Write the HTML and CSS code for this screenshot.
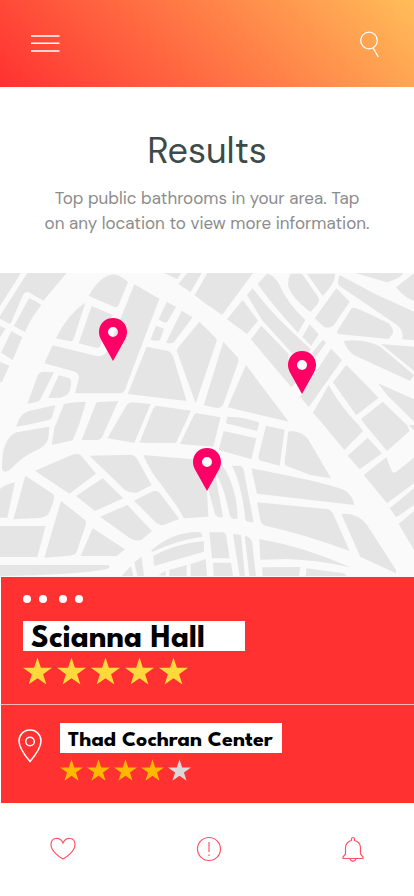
FILE: index.html
```html
<!DOCTYPE html>
<html lang="en">
<head>
<meta charset="utf-8">
<meta name="viewport" content="width=device-width, initial-scale=1">
<title>Results</title>
<link rel="stylesheet" href="styles.css">
</head>
<body>
<svg class="defs" aria-hidden="true">
  <symbol id="star" viewBox="0 0 30 28"><path d="M15 0L18.5 10.7H30L20.8 17.3L24.2 28L15 21.4L5.8 28L9.2 17.3L0 10.7H11.5Z"/></symbol>
  <symbol id="pin" viewBox="0 0 28 43"><path fill-rule="evenodd" d="M14 0C6 0 0 6 0 14C0 17 .8 19 2 21.500L14 43L26 21.500C27.200 19 28 17 28 14C28 6 22 0 14 0ZM14 9A5 5 0 1 1 14 19A5 5 0 1 1 14 9Z"/></symbol>
</svg>
<header class="topbar">
  <button type="button" class="icon-button" aria-label="Menu"><svg width="30" height="28" viewBox="0 0 30 28"><path d="M1 6H29.500M1 13.300H29.500M1 21H29.500" fill="none" stroke="#fff" stroke-width="1.400"/></svg></button>
  <button type="button" class="icon-button" aria-label="Search"><svg width="22" height="28" viewBox="0 0 22 28"><circle cx="11" cy="10.500" r="8.300" fill="none" stroke="#fff" stroke-width="1.200"/><path d="M15 17.800L20.300 27" fill="none" stroke="#fff" stroke-width="1.300"/></svg></button>
</header>
<main>
  <section class="intro">
    <h1>Results</h1>
    <p>Top public bathrooms in your area. Tap<br>on any location to view more information.</p>
  </section>
  <section class="map" aria-label="Map">
    <svg class="streets" viewBox="0 0 1242 912" aria-hidden="true">
      <rect width="1242" height="912" fill="#fafafa"/>
      <g fill="#e5e5e5">
        <path transform="translate(0 -9)" d="M0 9H63L0 108ZM82 9H200L130 92L86 67Q74 64 69 75L34 156Q32 163 26 160L0 146V138ZM87 85Q92 84 124 105Q95 140 75 186L42 168ZM0 168L17 176L0 202ZM34 184L67 202L38 270L3 248ZM0 275L28 287L5 338L0 335ZM266 78Q300 17 340 13Q360 15 384 36L358 100Q354 112 346 112ZM256 98L221 206Q218 215 210 214L168 205Q205 130 256 98ZM275 108L338 135L305 190V220Q302 234 290 234L236 220ZM403 43L478 86L382 340Q375 370 360 370H225L237 325Q238 312 225 305L133 280L158 226L290 258Q312 260 320 245L360 150ZM125 306H162L120 390Q115 397 82 402L110 325Q115 308 125 306ZM176 316L205 323Q216 327 213 345Q211 378 180 383L145 384ZM50 465Q62 425 100 420L166 406L156 442Q152 450 144 451L80 465ZM192 402Q200 398 258 395L237 465H167ZM440 230L505 243Q513 247 520 262L560 393L383 372ZM500 96L528 110L502 156Q496 162 476 148ZM468 167L492 176L480 210Q465 216 452 208ZM545 122L578 142L522 216Q518 222 498 218ZM492 9H545L532 28ZM562 9H605L572 66L535 42ZM627 9V109L584 76L622 9Z"/>
        <path transform="translate(495 -9)" d="M103 155L152 203Q157 208 154 216L92 400L38 250Q33 242 38 235ZM175 215L218 262Q223 268 220 276L175 402Q170 414 155 414L116 406Z"/>
        <path transform="translate(240 351)" d="M48 40Q50 36 60 36L115 33L66 142Q62 150 50 150H5ZM155 37L212 42L163 158L82 145L140 45Q145 37 155 37ZM230 47L333 62L288 158H178L220 55Q224 47 230 47ZM350 70L422 82L400 170L300 162L340 78Q343 70 350 70ZM438 100Q438 82 460 82Q520 90 538 98L531 123Z"/>
        <path transform="translate(621 -9)" d="M0 9H138L52 126L45 135L0 103ZM117 285L245 455L62 412ZM107 90L153 152L120 192L60 148ZM137 55Q200 140 312 238L290 262L255 250L165 150L120 75ZM165 28L180 11Q200 15 215 40Q240 100 295 150L273 188Q200 110 152 42ZM163 167L245 252L243 300L270 335L253 352L132 208ZM308 163L335 193L312 228L286 200ZM250 11H285L333 80Q340 92 330 105L310 126Q250 80 243 45Q243 25 250 11ZM300 11H385Q385 40 347 78ZM388 55L428 95L383 162Q370 178 350 170L323 145ZM440 113Q450 112 545 160Q560 175 558 190L545 207L400 193Q385 190 393 180L428 123Q434 113 440 113ZM398 15L500 70L621 125V211L586 208Q590 180 570 165L398 48Q388 40 398 15ZM445 9H590Q580 25 540 37ZM621 10V92Q600 90 567 52ZM410 213Q470 205 520 230L621 315L610 333L440 255Q420 240 410 213ZM522 222L621 230V303ZM347 209L357 218L325 263L315 250ZM372 236L405 270L305 412L280 380L324 310ZM418 284L515 383L448 436L378 337ZM513 340L621 388V455L540 375ZM527 395L600 465H475L462 447ZM365 345Q400 410 455 465H350L318 428ZM60 440Q130 440 155 465H152L62 462Z"/>
        <path transform="translate(0 456)" d="M48 5L80 0H50ZM148 5L145 40Q140 65 100 80Q60 100 35 130Q10 150 6 130Q5 40 50 22ZM165 0H237L218 46L155 60ZM105 137L215 90Q240 80 250 100L288 146L208 206ZM268 92L395 89Q405 92 410 100L455 180L410 203Q390 205 375 195ZM308 160L370 220L285 258L228 213ZM430 90L580 103L621 200L625 275L552 280Q545 270 535 250L485 180Q450 140 430 90ZM402 227L460 198Q475 195 480 205L538 282L490 300Q475 300 465 290ZM382 240L456 318L425 344Q405 350 390 340L300 275ZM76 152L160 208Q165 215 160 230L147 265Q140 280 100 280L40 283ZM0 192Q15 178 45 172L22 278H0ZM0 303H137L112 396H0ZM183 228L255 285Q260 292 257 300L230 380Q228 390 205 392L133 398ZM278 310L375 373L350 393H242ZM0 420H325Q335 425 320 432Q230 450 0 453ZM455 375Q520 320 595 321Q607 322 607 335Q530 345 455 382ZM460 392Q530 355 612 348V380L462 423ZM475 450L497 437V453ZM508 435L560 420V453H508ZM572 417L617 403L621 453H572ZM393 423L400 453H365ZM403 412L425 395L432 453H412Z"/>
        <path transform="translate(621 456)" d="M50 18L148 40L133 103L35 75ZM177 2L233 14L218 122L165 108Q152 105 155 90ZM250 18Q290 20 305 45L372 160L310 150L240 123Q232 120 233 110L243 25Q244 18 250 18ZM133 130Q390 180 420 200Q440 220 442 240L150 206ZM150 232L365 253Q375 258 380 270L428 378Q300 330 175 302Q160 295 160 285ZM403 267Q450 262 480 300L567 435V445L460 395ZM157 342Q290 365 430 427Q330 405 240 402L160 404ZM165 427L280 426L276 453H167ZM298 430L410 445L420 453H296ZM350 0H455L468 18L412 75ZM475 0H600L608 18L540 78ZM590 0H605L621 16V0ZM482 38L525 85L458 133L422 92ZM538 97L555 140Q562 145 568 140L621 98V175L540 235L470 150ZM621 190V240L568 277L548 250ZM621 258V375L575 297ZM4 193L24 145L48 275Q40 282 25 270ZM42 118Q50 125 58 140Q90 200 92 280Q75 287 68 270Q50 180 28 150ZM75 122H100Q108 125 110 135L140 292Q120 292 115 285Q105 180 75 122ZM7 322H50Q57 325 58 335L68 400H15ZM18 413H72L78 453H20ZM78 326L102 330L114 453H98ZM113 333Q130 335 135 350L147 453H127Z"/>
      </g>
    </svg>
    <button type="button" class="marker marker-west" aria-label="Location 1"><svg><use href="#pin"/></svg></button>
    <button type="button" class="marker marker-east" aria-label="Location 2"><svg><use href="#pin"/></svg></button>
    <button type="button" class="marker marker-south" aria-label="Location 3"><svg><use href="#pin"/></svg></button>
  </section>
  <section class="places">
    <article class="place featured">
      <div class="dots" aria-hidden="true"><span class="pair"><i></i><i></i></span><span class="pair"><i></i><i></i></span></div>
      <h2>Scianna Hall</h2>
      <div class="stars large" role="img" aria-label="5 of 5 stars"><svg><use href="#star"/></svg><svg><use href="#star"/></svg><svg><use href="#star"/></svg><svg><use href="#star"/></svg><svg><use href="#star"/></svg></div>
    </article>
    <article class="place compact">
      <svg class="outline-pin" width="24" height="34" viewBox="0 0 24 34" fill="none" stroke="#fff" stroke-width="1.500" aria-hidden="true"><path d="M12 1C5.500 1 1 6 1 12C1 19 6.500 26 12 32.500C17.500 26 23 19 23 12C23 6 18.500 1 12 1Z"/><circle cx="12" cy="12.500" r="4.300"/></svg>
      <div>
        <h3>Thad Cochran Center</h3>
        <div class="stars" role="img" aria-label="4 of 5 stars"><svg><use href="#star"/></svg><svg><use href="#star"/></svg><svg><use href="#star"/></svg><svg><use href="#star"/></svg><svg class="empty"><use href="#star"/></svg></div>
      </div>
    </article>
  </section>
</main>
<nav class="tabs" aria-label="Main">
  <a href="#favorites" aria-label="Favorites"><svg width="26" height="26" viewBox="0 0 26 26"><path d="M13 23C9 21 1 15 1 8.500C1 1 10 .5 13 7C16 .5 25 1 25 8.500C25 15 17 21 13 23Z"/></svg></a>
  <a href="#report" aria-label="Report"><svg width="26" height="26" viewBox="0 0 26 26"><circle cx="13" cy="13" r="11.500"/><path d="M13 6V16M13 18.500V20"/></svg></a>
  <a href="#alerts" aria-label="Alerts"><svg width="22" height="26" viewBox="0 0 22 26"><path d="M9.500 4.500V3A1.500 1.500 0 0 1 12.500 3V4.500C16.500 5.500 18.500 8 18.500 12V18L21 21V22.500H1V21L3.500 18V12C3.500 8 5.500 5.500 9.500 4.500ZM8 22.500C8.500 26 13.500 26 14 22.500"/></svg></a>
</nav>
</body>
</html>
```
FILE: styles.css
```css
* { box-sizing: border-box; }
body { margin: 0; background: #fff; font-family: "DM Sans", Inter, sans-serif; }
h1, h2, h3, p { margin: 0; }
button { padding: 0; border: 0; background: none; cursor: pointer; }
svg { display: block; }
.defs { position: absolute; width: 0; height: 0; }

.topbar {
  display: flex;
  align-items: center;
  justify-content: space-between;
  height: 87px;
  padding: 0 34px 0 30px;
  background: linear-gradient(45deg, #ff3131, #ffbd59);
}

.intro { padding: 40px 16px 37px; text-align: center; }
.intro h1 {
  color: #3c4a4a;
  font-size: 36px;
  font-weight: 400;
  line-height: 48px;
}
.intro p {
  margin-top: 11px;
  color: #8c8c8c;
  font-size: 17px;
  line-height: 25px;
}

.map { position: relative; }
.streets { width: 100%; height: auto; }
.marker {
  position: absolute;
  width: 28px;
  height: 43px;
  transform: translate(-50%, -100%);
  fill: #ff0066;
}
.marker svg { width: 100%; height: 100%; }
.marker-west { left: 27.200%; top: 29%; }
.marker-east { left: 72.900%; top: 39.700%; }
.marker-south { left: 50%; top: 71.700%; }

.places { margin-left: 1px; background: #ff3131; }
.featured { padding: 18px 22px 19px; }
.dots, .pair { display: flex; }
.dots { gap: 12px; }
.pair { gap: 8px; }
.pair i { width: 8px; height: 8px; border-radius: 50%; background: #fff; }
h2, h3 {
  width: 222px;
  height: 30px;
  padding-left: 8px;
  background: #fff;
  color: #000;
  font-family: "League Spartan", Lato, sans-serif;
  font-weight: 700;
  line-height: 36px;
  white-space: nowrap;
}
h2 { margin-top: 18px; font-size: 32px; line-height: 38px; }
h3 { font-size: 22px; }
.stars { display: flex; gap: 4px; margin-top: 6px; fill: #ffb800; }
.stars svg { width: 23px; height: 22px; }
.stars.large { gap: 5px; fill: #ffd93b; }
.stars.large svg { width: 29px; height: 28px; }
.stars .empty { fill: #d9d9d9; }
.compact {
  display: flex;
  gap: 18px;
  padding: 18px 17px 22px;
  border-top: 1px solid #ffb5b5;
}
.outline-pin { margin-top: 6px; }

.tabs {
  display: flex;
  align-items: center;
  justify-content: space-between;
  padding: 33px 50px;
}
.tabs svg { fill: none; stroke: #ff5266; stroke-width: 1.200; }
```
